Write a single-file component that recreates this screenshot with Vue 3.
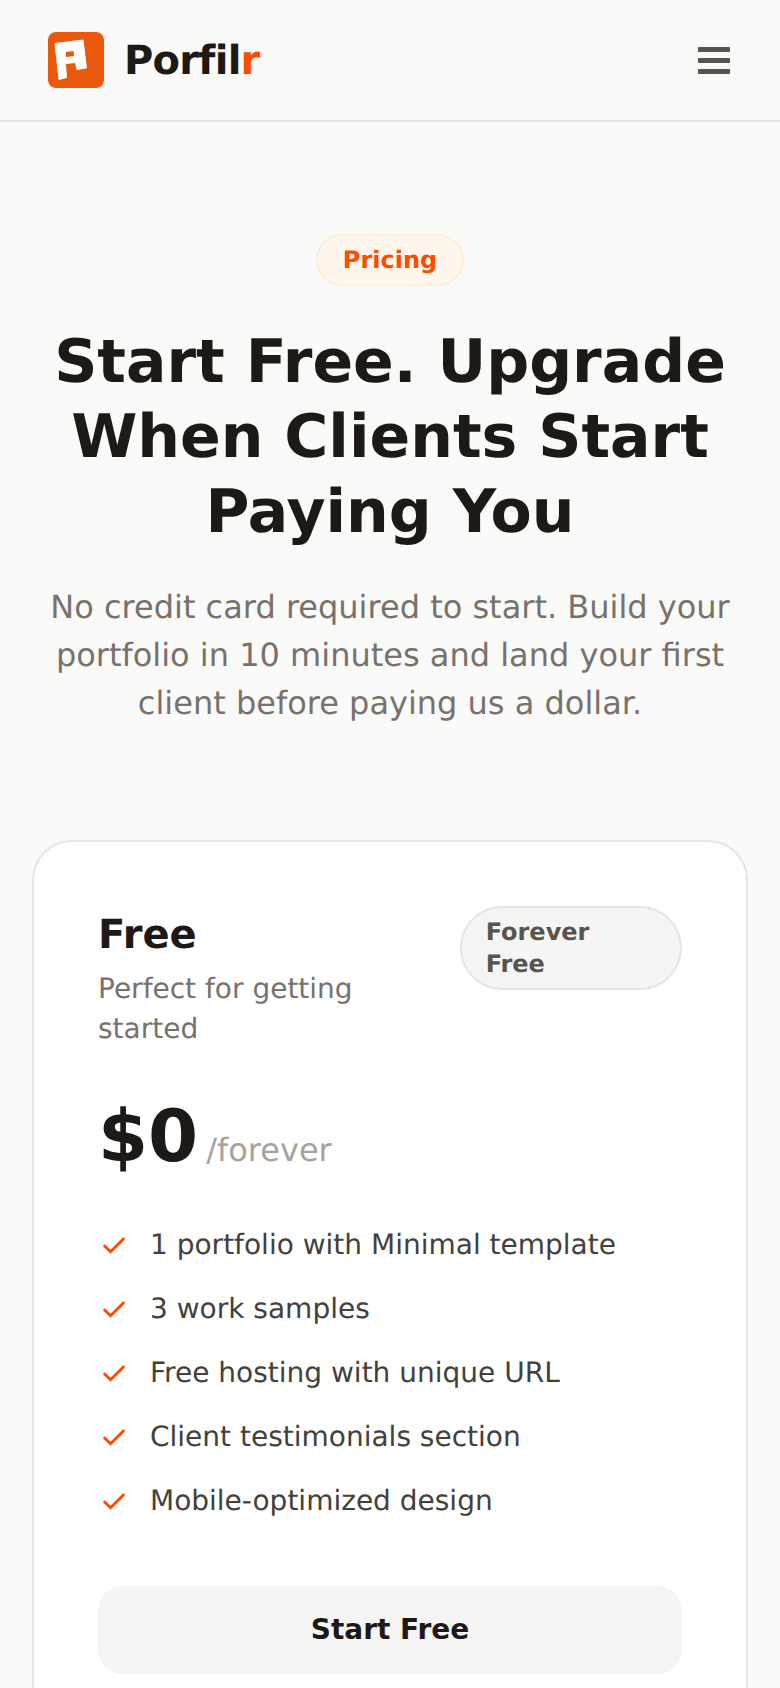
<template>
  <div class="page">
    <!-- Header -->
    <header class="topbar">
      <div class="brand">
        <svg class="logo" viewBox="0 0 56 56" width="56" height="56">
          <rect width="56" height="56" rx="8" fill="#ea580c" />
          <path d="M7 11.5 L35 8 L38.5 36 L29 37.5 L27.5 30.5 L17.5 31.5 L18.5 45.5 L11 47.5 Z" fill="#fff" stroke="#fff" stroke-width="1" stroke-linejoin="round" />
          <path d="M18 20 L25.5 19 L26 24 L18 25 Z" fill="#ea580c" />
        </svg>
        <span class="brand-name">Porfil<span class="accent">r</span></span>
      </div>
      <button class="menu-btn" aria-label="Menu">
        <span></span><span></span><span></span>
      </button>
    </header>

    <!-- Intro -->
    <section class="intro">
      <span class="tag">Pricing</span>
      <h1>Start Free. Upgrade When Clients Start Paying You</h1>
      <p>No credit card required to start. Build your portfolio in 10 minutes and land your first client before paying us a dollar.</p>
    </section>

    <!-- Plan -->
    <section class="plans">
      <div class="plan-card">
        <div class="plan-head">
          <div class="plan-title">
            <h3>Free</h3>
            <p>Perfect for getting started</p>
          </div>
          <span class="plan-badge">Forever Free</span>
        </div>

        <div class="price">
          <span class="amount">$0</span>
          <span class="period">/forever</span>
        </div>

        <ul class="features">
          <li v-for="item in features" :key="item">
            <svg viewBox="0 0 24 24" width="28" height="28" fill="none" stroke="#ff4d00" stroke-width="2.5" stroke-linecap="round" stroke-linejoin="round">
              <path d="M20 6 9 17l-5-5" />
            </svg>
            <span>{{ item }}</span>
          </li>
        </ul>

        <button class="btn-start">Start Free</button>
      </div>
    </section>
  </div>
</template>

<script setup>
const features = [
  "1 portfolio with Minimal template",
  "3 work samples",
  "Free hosting with unique URL",
  "Client testimonials section",
  "Mobile-optimized design",
];
</script>

<style>
html, body {
  margin: 0;
  background: #fafaf9;
}
</style>

<style scoped>
.page {
  font-family: "DejaVu Sans", sans-serif;
  color: #1c1917;
  height: 1688px;
  overflow: hidden;
  text-rendering: geometricPrecision;
}

/* Header */
.topbar {
  height: 120px;
  padding: 0 48px;
  display: flex;
  justify-content: space-between;
  align-items: center;
  border-bottom: 2px solid #e7e5e4;
}

.brand {
  display: flex;
  align-items: center;
  gap: 20px;
}

.logo {
  display: block;
}

.brand-name {
  padding-top: 2px;
  font-size: 40px;
  font-weight: 700;
  letter-spacing: -0.8px;
}

.accent {
  color: #ff4d00;
}

.menu-btn {
  width: 32px;
  padding: 0;
  margin-right: 2px;
  border: none;
  background: none;
  display: flex;
  flex-direction: column;
  gap: 6px;
}

.menu-btn span {
  height: 5px;
  background: #57534e;
  border-radius: 1px;
}

/* Intro */
.intro {
  padding: 112px 48px 0;
  text-align: center;
}

.tag {
  display: inline-block;
  padding: 6px 25px;
  font-size: 24px;
  line-height: 36px;
  font-weight: 700;
  color: #ff4d00;
  background: #fff7ed;
  border: 2px solid #ffedd5;
  border-radius: 9999px;
}

.intro h1 {
  margin: 39px 0 0;
  font-size: 60px;
  line-height: 75px;
  font-weight: 700;
}

.intro p {
  margin: 33px 0 0;
  font-size: 32px;
  line-height: 48px;
  color: #78716c;
}

/* Plan */
.plans {
  padding: 113px 32px 0;
}

.plan-card {
  background: #fff;
  border: 2px solid #e7e5e4;
  border-radius: 40px;
  padding: 64px;
}

.plan-head {
  display: flex;
  justify-content: space-between;
  align-items: flex-start;
}

.plan-title h3 {
  margin: 0;
  font-size: 40px;
  line-height: 58px;
  font-weight: 700;
}

.plan-title p {
  margin: 5px 0 0;
  font-size: 28px;
  line-height: 40px;
  color: #78716c;
}

.plan-badge {
  padding: 8px 24px;
  font-size: 24px;
  line-height: 32px;
  font-weight: 700;
  color: #57534e;
  background: #f5f5f4;
  border: 2px solid #e7e5e4;
  border-radius: 9999px;
}

.price {
  margin-top: 47px;
  display: flex;
  align-items: baseline;
  gap: 8px;
}

.amount {
  font-size: 72px;
  line-height: 80px;
  font-weight: 700;
}

.period {
  font-size: 32px;
  color: #a8a29e;
}

.features {
  list-style: none;
  margin: 36px 0 0;
  padding: 0;
}

.features li {
  display: flex;
  align-items: center;
  gap: 22px;
  height: 64px;
  font-size: 28px;
  color: #44403c;
}

.features svg {
  flex-shrink: 0;
  margin: 3px 0 0 2px;
}

.btn-start {
  display: block;
  width: 100%;
  height: 88px;
  margin-top: 54px;
  padding: 0 0 2px;
  border: none;
  border-radius: 24px;
  background: #f5f5f4;
  color: #1c1917;
  font-family: inherit;
  font-size: 28px;
  font-weight: 700;
}
</style>
